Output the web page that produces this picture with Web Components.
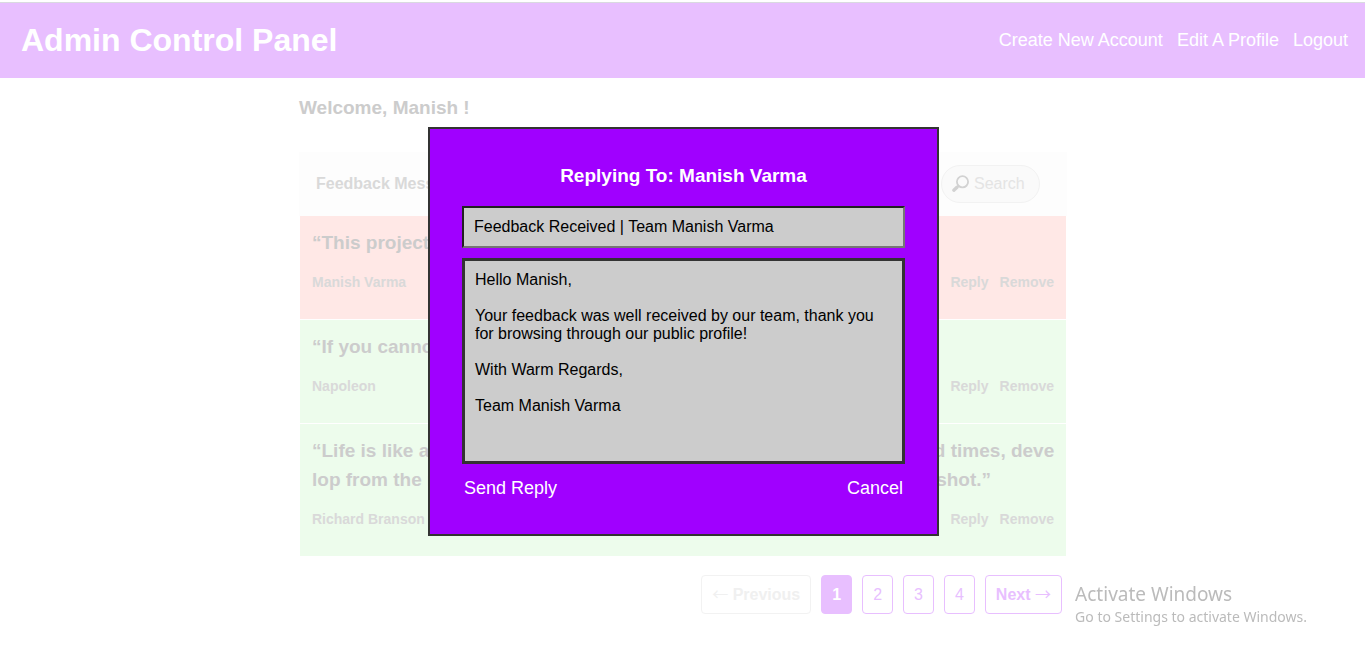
<!DOCTYPE html>
<html lang="en">
<head>
<meta charset="utf-8">
<title>Admin Control Panel</title>
<style>
  body { margin: 0; font-family: "Liberation Sans", Arial, sans-serif; background: #fff; color: #ccc; }
</style>
</head>
<body>
<admin-page></admin-page>
<script>
const define = (name, html, setup) => {
  const template = document.createElement('template');
  template.innerHTML = html;
  customElements.define(name, class extends HTMLElement {
    connectedCallback() {
      if (this.shadowRoot) return;
      const root = this.attachShadow({ mode: 'open' });
      root.append(template.content.cloneNode(true));
      if (setup) setup(this, root);
    }
  });
};

define('admin-header', `
  <style>
    :host { display: block; padding-top: 2px; }
    header { display: flex; justify-content: space-between; align-items: center; box-sizing: border-box;
      min-height: 76px; padding: 0 17px 2px 21px; border-top: 1px solid #d9dae0; background: #e8bfff; color: #fff; }
    h1 { margin: 0; font-size: 32px; line-height: 38px; }
    nav { display: flex; gap: 14px; }
  </style>
  <header><h1><slot name="title"></slot></h1><nav><slot></slot></nav></header>`);

define('nav-link', `
  <style>
    :host { display: block; }
    a { color: #fff; text-decoration: none; font-size: 18px; line-height: 20px; }
  </style>
  <a href="#"><slot></slot></a>`);

define('search-field', `
  <style>
    :host { display: block; }
    label { display: flex; align-items: center; gap: 4px; box-sizing: border-box; width: 99px; height: 38px;
      padding: 0 9px; border: 1px solid #f2f2f2; border-radius: 19px; background: #fafafa; }
    svg { flex: none; }
    input { flex: 1; min-width: 0; padding: 0; border: 0; outline: 0; background: none; font: 16px "Liberation Sans", Arial, sans-serif; }
    input::placeholder { color: #e4e4e4; opacity: 1; }
  </style>
  <label>
    <svg width="19" height="18" viewBox="0 0 19 18" fill="none" stroke="#d2d2d2" aria-hidden="true">
      <circle cx="11.5" cy="6.8" r="5.6" stroke-width="1.8"/>
      <path d="M7.5 10.8L6 12.3" stroke-width="2"/>
      <path d="M6 12.2L2.8 15.2" stroke-width="3.4" stroke-linecap="round"/>
    </svg>
    <input type="text" placeholder="Search" aria-label="Search">
  </label>`);

define('feedback-list', `
  <style>
    :host { display: block; }
    .bar { display: flex; justify-content: space-between; align-items: center; min-height: 64px; padding: 0 27px 0 17px; background: #fdfdfd; }
    h2 { margin: 0; font-size: 16px; line-height: 20px; color: #d9d9d9; }
    .rows { display: grid; gap: 1px; padding: 0 1px; }
  </style>
  <div class="bar"><h2><slot name="title"></slot></h2><search-field></search-field></div>
  <div class="rows"><slot></slot></div>`);

define('feedback-item', `
  <style>
    :host { display: block; padding: 12px 10px 27px 12px; background: #edfcec; }
    :host([unread]) { background: #ffe8e6; }
    blockquote { margin: 0 0 16px; font-size: 19px; line-height: 29px; font-weight: bold; word-break: break-all; color: #ccc; }
    footer { display: flex; gap: 11px; padding-right: 2px; font-size: 14px; line-height: 19px; font-weight: bold; color: #d9d9d9; }
    .author { flex: 1; }
    a { color: inherit; text-decoration: none; }
  </style>
  <blockquote><slot></slot></blockquote>
  <footer><span class="author"></span><a href="#">Reply</a><a href="#">Remove</a></footer>`,
  (host, root) => { root.querySelector('.author').textContent = host.getAttribute('author'); });

define('page-button', `
  <style>
    :host { display: block; }
    button { display: block; padding: 10px; border: 1px solid #e8bfff; border-radius: 4px; background: #fff;
      color: #e8bfff; font: 16px/17px "Liberation Sans", Arial, sans-serif; }
    :host([bold]) button { font-weight: bold; }
    :host([current]) button { background: #e8bfff; color: #fff; }
    :host([off]) button { border-color: #f2f2f2; color: #f0f0f0; }
    ::slotted(.arrow) { font-family: "Noto Sans CJK JP", sans-serif; font-weight: normal; line-height: 1px; }
  </style>
  <button type="button"><slot></slot></button>`,
  (host, root) => { root.querySelector('button').disabled = host.hasAttribute('off'); });

define('page-nav', `
  <style>
    :host { display: block; }
    nav { display: flex; justify-content: flex-end; gap: 10px; padding: 19px 5px 0 0; }
  </style>
  <nav aria-label="Pages"><slot></slot></nav>`);

define('reply-dialog', `
  <style>
    :host { position: fixed; inset: 0; display: flex; justify-content: center; align-items: flex-start; padding: 127px 0 0 2px; }
    dialog { position: static; display: block; box-sizing: border-box; width: 511px; max-width: 100%; margin: 0; padding: 36px 32px;
      border: 2px solid #333; background: #a000ff; color: #fff; }
    h2 { margin: 0 0 19px; font-size: 19px; line-height: 22px; text-align: center; }
    input, textarea { display: block; box-sizing: border-box; width: 100%; margin: 0 0 10px; background: #ccc; color: #000;
      border-radius: 0; outline: 0; resize: none; font: 16px/18px "Liberation Sans", Arial, sans-serif; }
    input { height: 42px; padding: 0 10px; border: 2px inset #767676; }
    textarea { height: 206px; padding: 10px; border: 3px solid #333; overflow: hidden; }
    .actions { display: flex; justify-content: space-between; padding: 4px 2px 0; }
    button { padding: 0; border: 0; background: none; color: #fff; font: 18px/20px "Liberation Sans", Arial, sans-serif; }
  </style>
  <dialog open aria-labelledby="heading">
    <h2 id="heading"><slot></slot></h2>
    <form>
      <input type="text" aria-label="Subject" value="Feedback Received | Team Manish Varma">
      <textarea aria-label="Message" spellcheck="false">Hello Manish,

Your feedback was well received by our team, thank you for browsing through our public profile!

With Warm Regards,

Team Manish Varma</textarea>
      <div class="actions"><button type="button">Send Reply</button><button type="button">Cancel</button></div>
    </form>
  </dialog>`);

define('activation-notice', `
  <style>
    :host { position: fixed; right: 58px; bottom: 31px; color: #bbb; font-family: "Noto Sans", "Open Sans", sans-serif; white-space: nowrap; }
    p { margin: 0; }
    .title { font-size: 19px; line-height: 26px; }
    .hint { font-size: 14px; line-height: 20px; }
  </style>
  <p class="title">Activate Windows</p>
  <p class="hint">Go to Settings to activate Windows.</p>`);

define('admin-page', `
  <style>
    :host { display: block; }
    main { max-width: 768px; margin: 0 auto; padding-left: 1px; }
    .welcome { margin: 0; padding: 19px 0 33px; font-size: 19px; line-height: 22px; font-weight: bold; }
  </style>
  <admin-header>
    <span slot="title">Admin Control Panel</span>
    <nav-link>Create New Account</nav-link>
    <nav-link>Edit A Profile</nav-link>
    <nav-link>Logout</nav-link>
  </admin-header>
  <main>
    <p class="welcome">Welcome, Manish !</p>
    <feedback-list>
      <span slot="title">Feedback Messages</span>
      <feedback-item unread author="Manish Varma">“This project is amazing!”</feedback-item>
      <feedback-item author="Napoleon">“If you cannot do great things”</feedback-item>
      <feedback-item author="Richard Branson">“Life is like a camera. Focus on what is important so capture the good times, develop from the negatives and if things don't work out, just take another shot.”</feedback-item>
    </feedback-list>
    <page-nav>
      <page-button off bold><span class="arrow">←</span> Previous</page-button>
      <page-button current bold>1</page-button>
      <page-button>2</page-button>
      <page-button>3</page-button>
      <page-button>4</page-button>
      <page-button bold>Next <span class="arrow">→</span></page-button>
    </page-nav>
  </main>
  <reply-dialog>Replying To: Manish Varma</reply-dialog>
  <activation-notice></activation-notice>`);
</script>
</body>
</html>
